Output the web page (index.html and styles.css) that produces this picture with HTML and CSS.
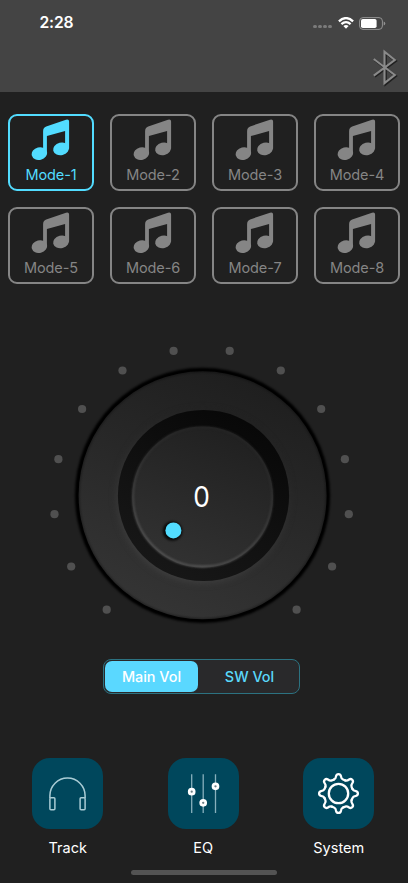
FILE: index.html
```html
<!DOCTYPE html>
<html lang="en">
<head>
<meta charset="utf-8">
<title>Volume control</title>
<link rel="stylesheet" href="styles.css">
</head>
<body>
<svg class="defs" width="0" height="0">
  <symbol id="note" viewBox="0 0 40 42">
    <path d="M12.1 35V13.2Q12.1 9.4 15.2 8.4L35 1.7Q38.1 .8 38.1 3.6V30.5H34.1V12.9L15.9 18.1V36Z"/>
    <ellipse cx="8.4" cy="35.6" rx="7.8" ry="6.3" transform="rotate(-14 8.4 35.6)"/>
    <ellipse cx="30.1" cy="30.9" rx="8.1" ry="6.3" transform="rotate(-14 30.1 30.9)"/>
  </symbol>
</svg>
<main class="app">
  <header class="header">
    <div class="status">
      <span class="time">2:28</span>
      <span class="signal"><i></i><i></i><i></i><i></i></span>
      <svg class="wifi" width="16" height="12" viewBox="0 0 16 12">
        <g fill="none" stroke="#fff" stroke-width="2.3"><path d="M.9 4.3Q8-2.1 15.1 4.3"/><path d="M3.4 7.2Q8 3 12.6 7.2"/></g>
        <path fill="#fff" d="M5.4 9Q8 6.9 10.6 9L8 11.8Z"/>
      </svg>
      <svg class="battery" width="27" height="13" viewBox="0 0 27 13">
        <rect x=".6" y=".6" width="22.8" height="11.8" rx="3.4" fill="none" stroke="#929292"/>
        <rect x="2" y="2" width="15.6" height="9" rx="1.8" fill="#fff"/>
        <path d="M24.7 4.4Q26.3 5 26.3 6.5T24.7 8.6Z" fill="#929292"/>
      </svg>
    </div>
    <svg class="bluetooth" width="28" height="38" viewBox="0 0 28 38">
      <path class="bt-shadow" d="M4.8 11L25.8 27 15.6 35.2V4L25.8 12 4.8 27.6"/>
      <path class="bt-line" d="M3.8 10L24.8 26 14.5 34V2.6L24.8 11 3.8 26.6"/>
    </svg>
  </header>

  <section class="modes">
    <div class="mode active"><svg class="note"><use href="#note"/></svg><span>Mode-1</span></div>
    <div class="mode"><svg class="note"><use href="#note"/></svg><span>Mode-2</span></div>
    <div class="mode"><svg class="note"><use href="#note"/></svg><span>Mode-3</span></div>
    <div class="mode"><svg class="note"><use href="#note"/></svg><span>Mode-4</span></div>
    <div class="mode"><svg class="note"><use href="#note"/></svg><span>Mode-5</span></div>
    <div class="mode"><svg class="note"><use href="#note"/></svg><span>Mode-6</span></div>
    <div class="mode"><svg class="note"><use href="#note"/></svg><span>Mode-7</span></div>
    <div class="mode"><svg class="note"><use href="#note"/></svg><span>Mode-8</span></div>
  </section>

  <svg class="dial" width="408" height="300" viewBox="0 340 408 300">
    <defs>
      <linearGradient id="face" x1=".3" y1="1" x2=".7" y2="0"><stop offset="0" stop-color="#353535"/><stop offset=".55" stop-color="#282828"/><stop offset="1" stop-color="#1e1e1e"/></linearGradient>
      <linearGradient id="groove" x1=".2" y1="1" x2=".75" y2="0"><stop offset="0" stop-color="#181818"/><stop offset=".5" stop-color="#101010"/><stop offset="1" stop-color="#070707"/></linearGradient>
      <linearGradient id="cap" x1=".3" y1="1" x2=".7" y2="0"><stop offset="0" stop-color="#323232"/><stop offset="1" stop-color="#202020"/></linearGradient>
      <linearGradient id="rim" x1=".35" y1="1" x2=".65" y2="0"><stop offset="0" stop-color="#686868"/><stop offset=".35" stop-color="#4a4a4a"/><stop offset=".7" stop-color="#303030"/><stop offset="1" stop-color="#252525"/></linearGradient>
      <linearGradient id="glow" x1=".3" y1="1" x2=".7" y2="0"><stop offset="0" stop-color="#404040"/><stop offset=".5" stop-color="#303030"/><stop offset="1" stop-color="#202020"/></linearGradient>
      <filter id="soft" x="-20%" y="-20%" width="140%" height="140%" color-interpolation-filters="sRGB"><feGaussianBlur stdDeviation="1"/></filter>
      <filter id="softer" x="-20%" y="-20%" width="140%" height="140%" color-interpolation-filters="sRGB"><feGaussianBlur stdDeviation="3"/></filter>
    </defs>
    <g fill="#505050">
      <circle cx="106.7" cy="609.7" r="4.1"/><circle cx="71.2" cy="566.5" r="4.1"/><circle cx="54.5" cy="514.2" r="4.1"/><circle cx="58.4" cy="459.2" r="4.1"/><circle cx="82.1" cy="409" r="4.1"/><circle cx="122.5" cy="370.5" r="4.1"/><circle cx="173.6" cy="350.9" r="4.1"/>
      <circle cx="229.7" cy="350.9" r="4.1"/><circle cx="280.8" cy="370.5" r="4.1"/><circle cx="321.2" cy="409" r="4.1"/><circle cx="344.9" cy="459.2" r="4.1"/><circle cx="348.8" cy="514.2" r="4.1"/><circle cx="332.1" cy="566.5" r="4.1"/><circle cx="296.6" cy="609.7" r="4.1"/>
    </g>
    <circle cx="202.5" cy="495.3" r="127.6" fill="#000" filter="url(#soft)"/>
    <circle cx="202.6" cy="495.3" r="124" fill="url(#face)"/>
    <circle cx="202.6" cy="495.3" r="124" fill="none" stroke="#000" stroke-opacity=".6" stroke-width="1.2" filter="url(#soft)"/>
    <circle cx="203" cy="496.2" r="87" fill="url(#glow)" filter="url(#softer)"/>
    <circle cx="203.5" cy="495.5" r="85.6" fill="url(#groove)"/>
    <circle cx="202.6" cy="497" r="70.5" fill="url(#cap)"/>
    <circle cx="202.6" cy="497" r="69.6" fill="none" stroke="url(#rim)" stroke-width="1.6" filter="url(#soft)"/>
    <circle cx="172.5" cy="531" r="9.8" fill="#090909" filter="url(#soft)"/>
    <circle cx="173.4" cy="530.4" r="8" fill="#52dcff"/>
    <text class="value" x="0" y="0" transform="translate(201.5 506.6) scale(.94 1)" text-anchor="middle">0</text>
  </svg>

  <div class="segmented">
    <div class="segment selected">Main Vol</div>
    <div class="segment">SW Vol</div>
  </div>

  <nav class="nav">
    <div class="nav-item">
      <div class="tile"><svg width="71" height="71" viewBox="0 0 71 71" fill="none" stroke="#a9ccd5" stroke-width="1.5"><path d="M17.9 40V37.6A17.6 17.6 0 0 1 53.1 37.6V40"/><rect x="17.9" y="39.8" width="5" height="12" rx="1"/><rect x="48.1" y="39.8" width="5" height="12" rx="1"/></svg></div>
      <span>Track</span>
    </div>
    <div class="nav-item">
      <div class="tile"><svg width="71" height="71" viewBox="0 0 71 71"><path d="M23.7 16.3V55M35.2 16.3V55M47.5 16.3V55" stroke="#87b0bc" stroke-width="1.3"/><g fill="#6d7f85" stroke="#fff" stroke-width="2.7"><circle cx="23.7" cy="33.7" r="2.5"/><circle cx="35.2" cy="44.8" r="2.5"/><circle cx="47.5" cy="28.3" r="2.5"/></g></svg></div>
      <span>EQ</span>
    </div>
    <div class="nav-item">
      <div class="tile"><svg width="71" height="71" viewBox="-35.5 -35.5 71 71" fill="none" stroke="#fff" stroke-width="2.3" stroke-linecap="round" stroke-linejoin="round">
        <path id="tooth" d="M-4.5-14C-3-14.6-2.6-16-2.4-17.4Q-2-19.4 0-19.4T2.4-17.4C2.6-16 3-14.6 4.5-14Q5.8-13.4 6.7-13.1"/>
        <use href="#tooth" transform="rotate(45)"/><use href="#tooth" transform="rotate(90)"/><use href="#tooth" transform="rotate(135)"/><use href="#tooth" transform="rotate(180)"/><use href="#tooth" transform="rotate(225)"/><use href="#tooth" transform="rotate(270)"/><use href="#tooth" transform="rotate(315)"/>
        <circle r="9.7"/></svg></div>
      <span>System</span>
    </div>
  </nav>
  <div class="home-bar"></div>
</main>
</body>
</html>
```
FILE: styles.css
```css
* { box-sizing: border-box; }
body { margin: 0; background: #202020; color: #fff; font-family: Inter, "Liberation Sans", sans-serif; }
.defs { display: block; }
.app { width: 408px; height: 883px; overflow: hidden; display: flex; flex-direction: column; }
.header { height: 91.5px; flex: none; background: #444; display: flex; flex-direction: column; align-items: flex-end; }
.status { width: 100%; height: 46px; padding: 0 22px 0 39.5px; display: flex; align-items: center; }
.time { font-size: 15.7px; font-weight: 600; line-height: 20px; letter-spacing: -.2px; margin-right: auto; }
.signal { display: flex; gap: 1.7px; margin: 7px 6px 0 0; }
.signal i { width: 3.3px; height: 3.3px; border-radius: 50%; background: #7b7b7b; }
.wifi { margin-right: 5.5px; }
.bluetooth { margin: 3px 10px 0 0; fill: none; }
.bt-shadow { stroke: #202020; stroke-width: 2.4; }
.bt-line { stroke: #8a8a8a; stroke-width: 2.1; }

.modes { display: grid; grid-template-columns: repeat(4, 86px); grid-auto-rows: 77.5px; gap: 15.7px 16px; padding: 22.3px 8px 0; }
.mode { border: 2px solid #858585; border-radius: 9px; color: #858585; display: flex; flex-direction: column; align-items: center; padding-top: 2px; font-size: 14.5px; line-height: 20px; }
.mode.active { border-color: #52dcff; color: #52dcff; }
.note { width: 40px; height: 42px; flex: none; fill: currentColor; }
.mode span { margin-top: 5px; font-weight: 400; letter-spacing: -.1px; }

.dial { display: block; flex: none; margin-top: 55.8px; }
.value { fill: #fff; font-size: 28px; font-weight: 400; }

.segmented { width: 197px; height: 35px; flex: none; margin: 18.7px 0 0 103px; padding: 1px; border: 1px solid #2c7281; border-radius: 8px; background: #29292b; display: grid; grid-template-columns: 93px 1fr; }
.segment { display: flex; align-items: center; justify-content: center; color: #5ad8fa; font-size: 14.4px; font-weight: 500; border-radius: 7px; padding-left: 3px; }
.segment.selected { background: #5ad8ff; color: #fff; padding-left: 0; }

.nav { display: grid; grid-template-columns: repeat(3, 135.5px); margin-top: 64px; }
.nav-item { display: flex; flex-direction: column; align-items: center; font-size: 14.5px; line-height: 20px; }
.tile { width: 71px; height: 71px; border-radius: 18px; background: #00475c; margin-bottom: 9px; }
.tile svg { display: block; }
.home-bar { width: 146px; height: 5px; flex: none; margin: 12px auto 0; border-radius: 3px; background: #535353; }
```
